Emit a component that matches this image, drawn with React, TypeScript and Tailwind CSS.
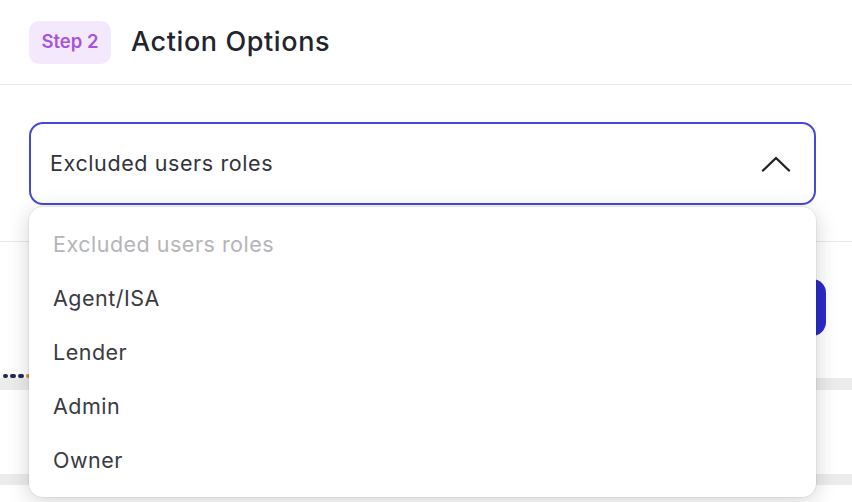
const roles = ["Agent/ISA", "Lender", "Admin", "Owner"]

function ChevronUp() {
  return (
    <svg width="30" height="16" viewBox="0 0 30 16" fill="none">
      <path d="M2 14.5 L15 2 L28 14.5" stroke="#222" strokeWidth="2.4" strokeLinecap="round" strokeLinejoin="round" />
    </svg>
  )
}

export default function App() {
  return (
    <div
      className="relative h-[502px] w-[852px] overflow-hidden bg-white text-[#2b2b33]"
      style={{ fontFamily: "Inter, 'Noto Sans', sans-serif" }}
    >
      {/* Header */}
      <div className="flex h-[85px] items-center gap-5 border-b border-[#e6e6e6] pl-[29px]">
        <span className="flex h-[43px] w-[82px] items-center justify-center rounded-[10px] bg-[#f4e9fc] text-[18.5px] font-semibold text-[#a555dc]">
          Step 2
        </span>
        <h1 className="text-[27px] font-medium tracking-[0.6px] text-[#24242c]">Action Options</h1>
      </div>

      {/* Select */}
      <div className="pl-[29px] pr-[36px] pt-[37px]">
        <div className="flex h-[83px] items-center justify-between rounded-[14px] border-2 border-[#4848d8] pl-[19px] pr-[23px]">
          <span className="text-[21.5px] tracking-[0.6px] text-[#33333b]">Excluded users roles</span>
          <ChevronUp />
        </div>
      </div>

      {/* Content behind the menu */}
      <div className="mt-[36px] border-t border-[#e8e8e8]">
        <div className="flex justify-end pr-[26px] pt-[37px]">
          <div className="h-[57px] w-[140px] rounded-[14px] bg-[#2b2bc8]" />
        </div>
        <div className="mt-[37px] flex h-[5px] items-center gap-[2px] pl-[3px]">
          <span className="h-[4px] w-[5px] rounded-full bg-[#1d2a5a]" />
          <span className="h-[4px] w-[6px] rounded-full bg-[#1d2a5a]" />
          <span className="h-[4px] w-[6px] rounded-full bg-[#1d2a5a]" />
          <span className="h-[4px] w-[4px] rounded-full bg-[#c88a3a]" />
        </div>
        <div className="h-[12px] bg-[#ececec]" />
        <div className="h-[84px] bg-white" />
        <div className="h-[11px] bg-[#ececec]" />
      </div>

      {/* Dropdown menu */}
      <div className="absolute left-[29px] top-[207px] w-[787px] rounded-[14px] bg-white py-[10px] shadow-[0_4px_22px_rgba(0,0,0,0.18)] ring-1 ring-black/5">
        <div className="flex h-[54px] items-center pl-[24px] text-[21.5px] tracking-[0.5px] text-[#b5b5b8]">
          Excluded users roles
        </div>
        {roles.map((r) => (
          <div key={r} className="flex h-[54px] items-center pl-[24px] text-[21.5px] tracking-[0.5px] text-[#3a3a42]">
            {r}
          </div>
        ))}
      </div>
    </div>
  )
}
